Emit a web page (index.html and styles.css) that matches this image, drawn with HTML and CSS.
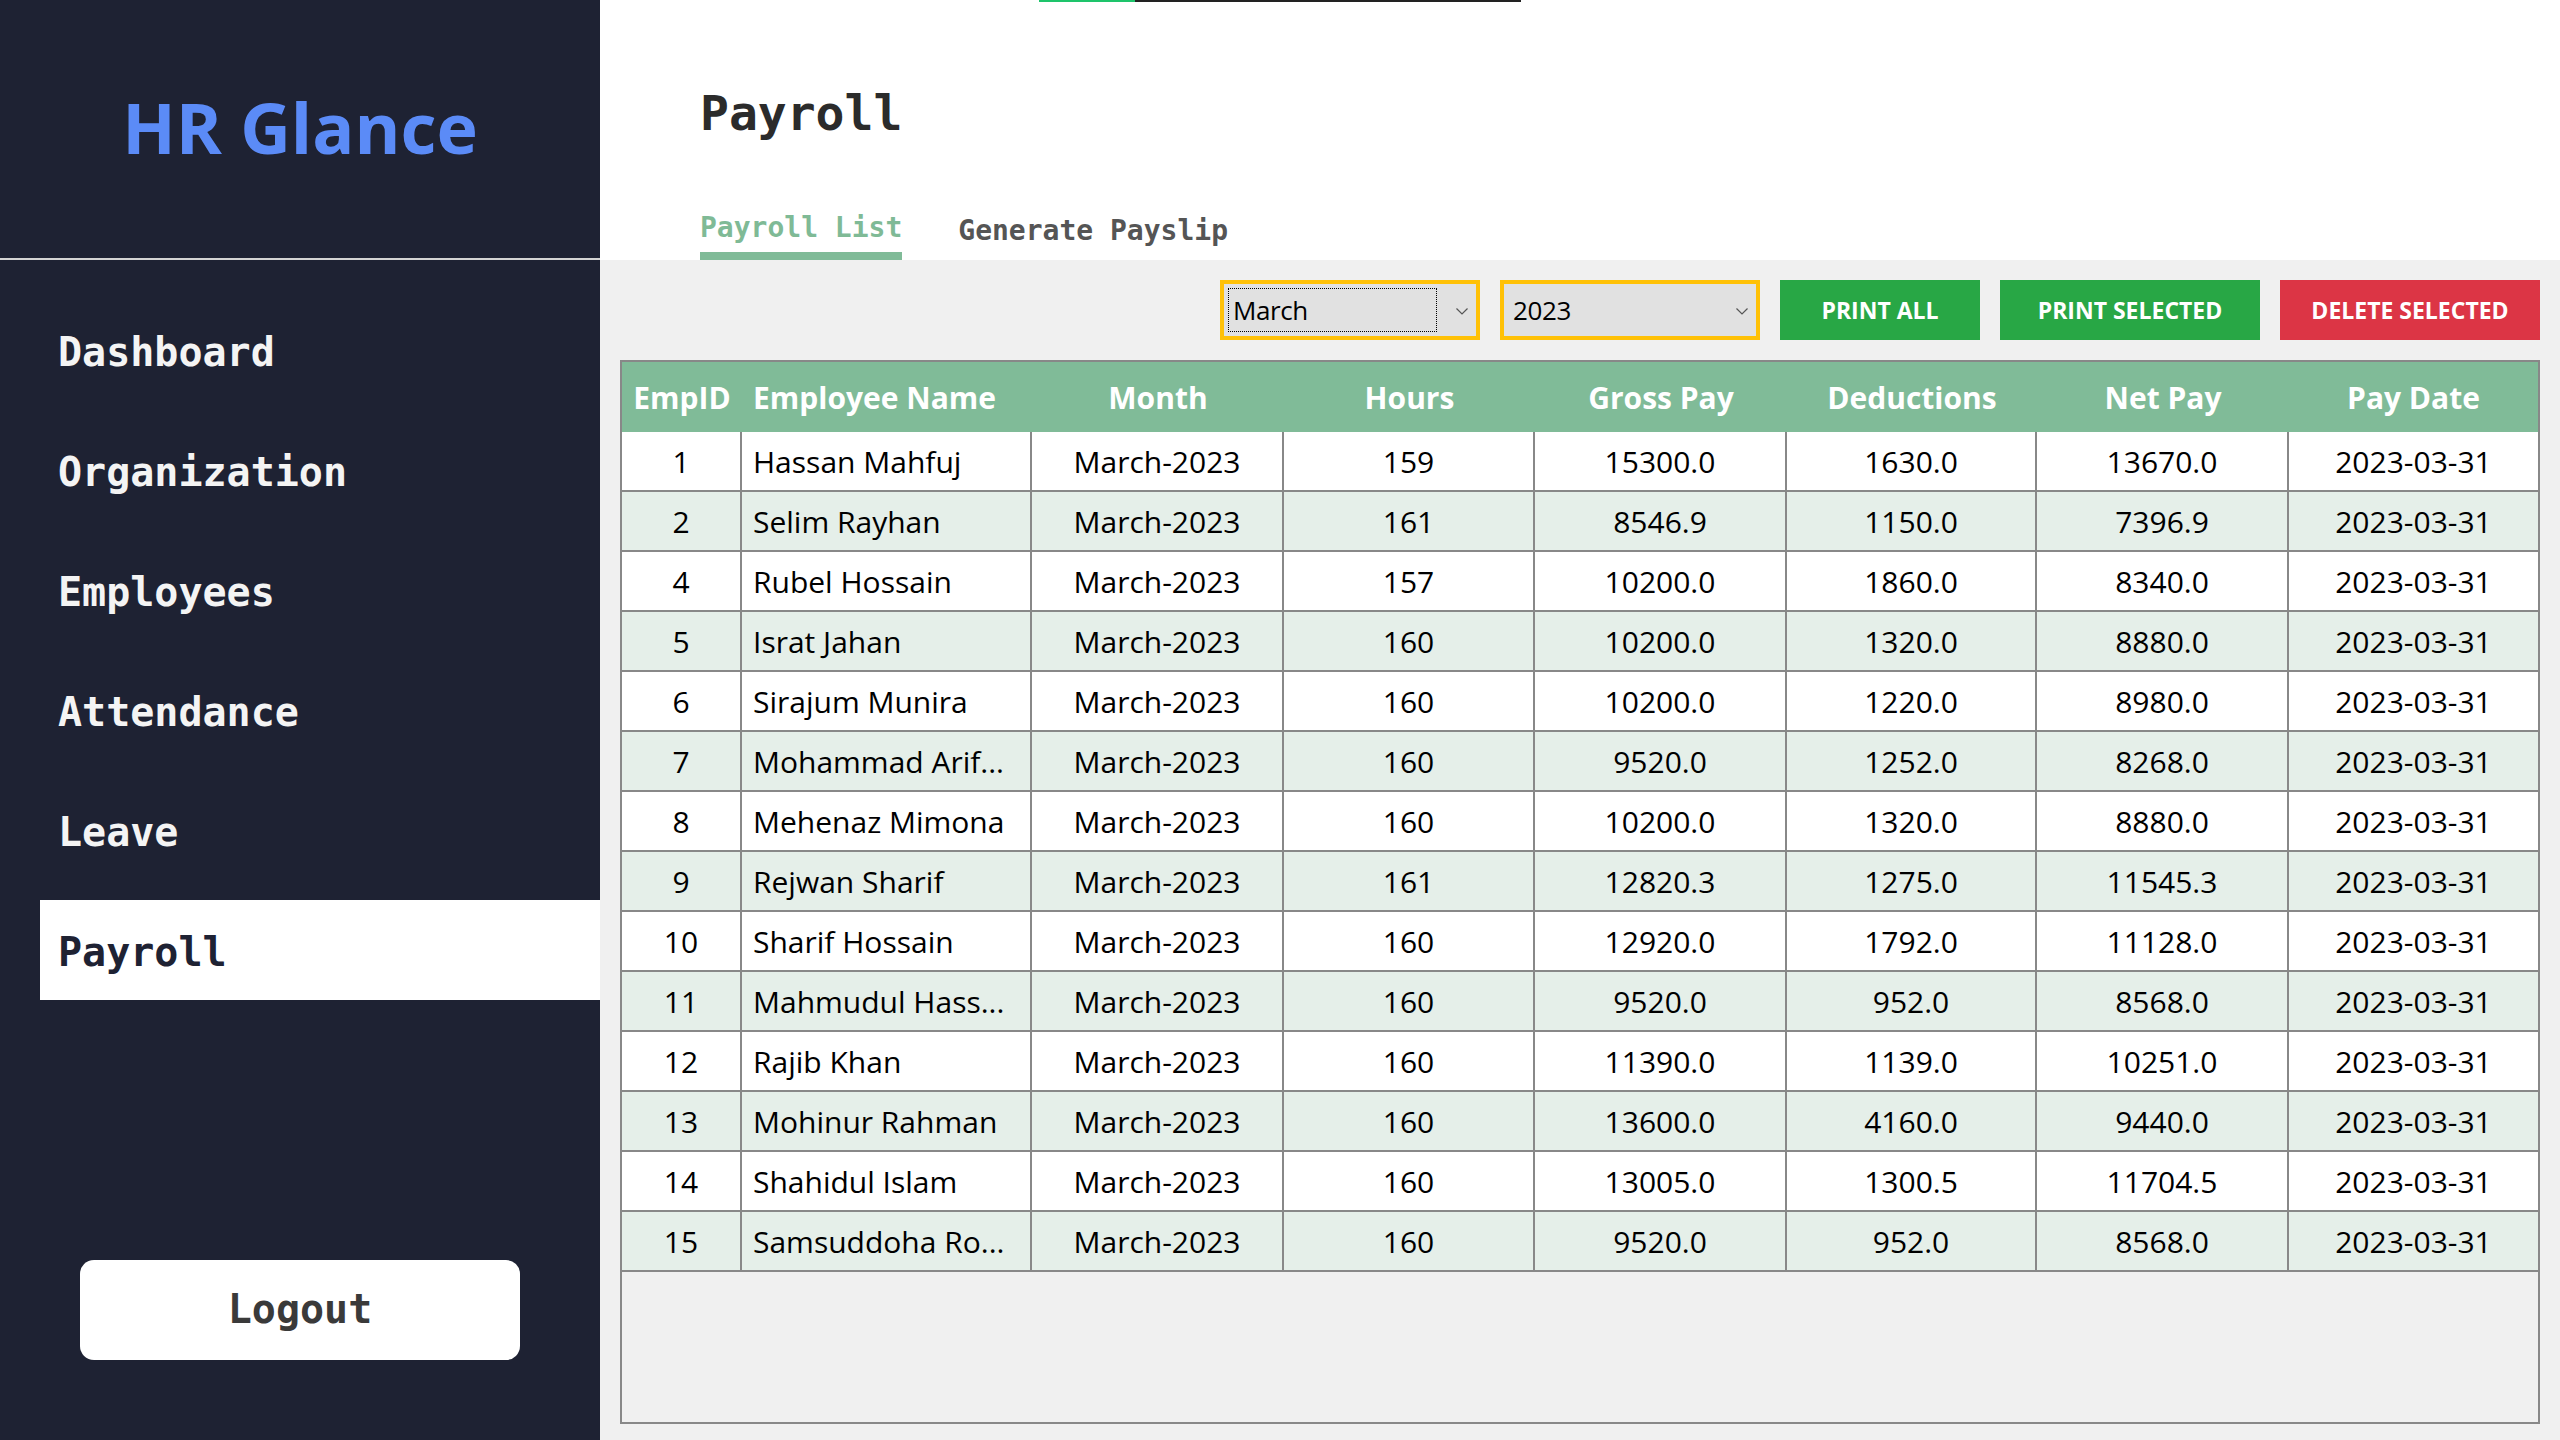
FILE: index.html
```html
<!DOCTYPE html>
<html lang="en">
<head>
<meta charset="utf-8">
<title>HR Glance - Payroll</title>
<link rel="stylesheet" href="styles.css">
</head>
<body>
<div class="app">
  <aside class="sidebar">
    <div class="brand">HR Glance</div>
    <nav class="nav">
      <a class="nav-item">Dashboard</a>
      <a class="nav-item">Organization</a>
      <a class="nav-item">Employees</a>
      <a class="nav-item">Attendance</a>
      <a class="nav-item">Leave</a>
      <a class="nav-item active">Payroll</a>
    </nav>
    <button class="logout">Logout</button>
  </aside>
  <main class="main">
    <div class="loader"><span class="loader-fill"></span></div>
    <header class="page-head">
      <h1 class="page-title">Payroll</h1>
      <div class="tabs">
        <span class="tab active">Payroll List</span>
        <span class="tab">Generate Payslip</span>
      </div>
    </header>
    <section class="content">
      <div class="toolbar">
        <div class="select">
          <span class="select-value focused">March</span>
          <svg class="chev" width="12" height="7" viewBox="0 0 12 7"><path d="M0.5 0.5 L6 6 L11.5 0.5" fill="none" stroke="#555" stroke-width="1.2"/></svg>
        </div>
        <div class="select">
          <span class="select-value">2023</span>
          <svg class="chev" width="12" height="7" viewBox="0 0 12 7"><path d="M0.5 0.5 L6 6 L11.5 0.5" fill="none" stroke="#555" stroke-width="1.2"/></svg>
        </div>
        <button class="btn btn-green btn-sm">PRINT ALL</button>
        <button class="btn btn-green">PRINT SELECTED</button>
        <button class="btn btn-red">DELETE SELECTED</button>
      </div>
      <div class="grid-wrap">
        <div class="row head">
          <div class="cell">EmpID</div>
          <div class="cell name">Employee Name</div>
          <div class="cell">Month</div>
          <div class="cell">Hours</div>
          <div class="cell">Gross Pay</div>
          <div class="cell">Deductions</div>
          <div class="cell">Net Pay</div>
          <div class="cell">Pay Date</div>
        </div>
        <div class="row"><div class="cell">1</div><div class="cell name">Hassan Mahfuj</div><div class="cell">March-2023</div><div class="cell">159</div><div class="cell">15300.0</div><div class="cell">1630.0</div><div class="cell">13670.0</div><div class="cell">2023-03-31</div></div>
        <div class="row"><div class="cell">2</div><div class="cell name">Selim Rayhan</div><div class="cell">March-2023</div><div class="cell">161</div><div class="cell">8546.9</div><div class="cell">1150.0</div><div class="cell">7396.9</div><div class="cell">2023-03-31</div></div>
        <div class="row"><div class="cell">4</div><div class="cell name">Rubel Hossain</div><div class="cell">March-2023</div><div class="cell">157</div><div class="cell">10200.0</div><div class="cell">1860.0</div><div class="cell">8340.0</div><div class="cell">2023-03-31</div></div>
        <div class="row"><div class="cell">5</div><div class="cell name">Israt Jahan</div><div class="cell">March-2023</div><div class="cell">160</div><div class="cell">10200.0</div><div class="cell">1320.0</div><div class="cell">8880.0</div><div class="cell">2023-03-31</div></div>
        <div class="row"><div class="cell">6</div><div class="cell name">Sirajum Munira</div><div class="cell">March-2023</div><div class="cell">160</div><div class="cell">10200.0</div><div class="cell">1220.0</div><div class="cell">8980.0</div><div class="cell">2023-03-31</div></div>
        <div class="row"><div class="cell">7</div><div class="cell name">Mohammad Arif...</div><div class="cell">March-2023</div><div class="cell">160</div><div class="cell">9520.0</div><div class="cell">1252.0</div><div class="cell">8268.0</div><div class="cell">2023-03-31</div></div>
        <div class="row"><div class="cell">8</div><div class="cell name">Mehenaz Mimona</div><div class="cell">March-2023</div><div class="cell">160</div><div class="cell">10200.0</div><div class="cell">1320.0</div><div class="cell">8880.0</div><div class="cell">2023-03-31</div></div>
        <div class="row"><div class="cell">9</div><div class="cell name">Rejwan Sharif</div><div class="cell">March-2023</div><div class="cell">161</div><div class="cell">12820.3</div><div class="cell">1275.0</div><div class="cell">11545.3</div><div class="cell">2023-03-31</div></div>
        <div class="row"><div class="cell">10</div><div class="cell name">Sharif Hossain</div><div class="cell">March-2023</div><div class="cell">160</div><div class="cell">12920.0</div><div class="cell">1792.0</div><div class="cell">11128.0</div><div class="cell">2023-03-31</div></div>
        <div class="row"><div class="cell">11</div><div class="cell name">Mahmudul Hass...</div><div class="cell">March-2023</div><div class="cell">160</div><div class="cell">9520.0</div><div class="cell">952.0</div><div class="cell">8568.0</div><div class="cell">2023-03-31</div></div>
        <div class="row"><div class="cell">12</div><div class="cell name">Rajib Khan</div><div class="cell">March-2023</div><div class="cell">160</div><div class="cell">11390.0</div><div class="cell">1139.0</div><div class="cell">10251.0</div><div class="cell">2023-03-31</div></div>
        <div class="row"><div class="cell">13</div><div class="cell name">Mohinur Rahman</div><div class="cell">March-2023</div><div class="cell">160</div><div class="cell">13600.0</div><div class="cell">4160.0</div><div class="cell">9440.0</div><div class="cell">2023-03-31</div></div>
        <div class="row"><div class="cell">14</div><div class="cell name">Shahidul Islam</div><div class="cell">March-2023</div><div class="cell">160</div><div class="cell">13005.0</div><div class="cell">1300.5</div><div class="cell">11704.5</div><div class="cell">2023-03-31</div></div>
        <div class="row"><div class="cell">15</div><div class="cell name">Samsuddoha Ro...</div><div class="cell">March-2023</div><div class="cell">160</div><div class="cell">9520.0</div><div class="cell">952.0</div><div class="cell">8568.0</div><div class="cell">2023-03-31</div></div>
      </div>
    </section>
  </main>
</div>
</body>
</html>
```

FILE: styles.css
```css
* { box-sizing: border-box; }

html, body {
  margin: 0;
  padding: 0;
}

body {
  width: 2560px;
  height: 1440px;
  overflow: hidden;
  font-family: "Open Sans", "Noto Sans", sans-serif;
  background: #ffffff;
}

.app {
  display: flex;
  height: 1440px;
}

/* ---------- Sidebar ---------- */
.sidebar {
  width: 600px;
  flex: none;
  background: #1e2233;
  display: flex;
  flex-direction: column;
}

.brand {
  height: 260px;
  border-bottom: 2px solid #d4d4d4;
  display: flex;
  align-items: center;
  justify-content: center;
  padding-bottom: 4px;
  font-family: "Open Sans", sans-serif;
  font-weight: 700;
  font-size: 70px;
  color: #5b8bf7;
}

.nav {
  display: flex;
  flex-direction: column;
  gap: 20px;
  padding-top: 40px;
}

.nav-item {
  height: 100px;
  margin-left: 40px;
  padding-left: 18px;
  padding-top: 3px;
  display: flex;
  align-items: center;
  font-family: "DejaVu Sans Mono", "Liberation Mono", monospace;
  font-weight: 700;
  font-size: 40px;
  color: #f4f4f4;
}

.nav-item.active {
  background: #ffffff;
  color: #1e2233;
}

.logout {
  margin: auto auto 80px;
  width: 440px;
  height: 100px;
  border: none;
  border-radius: 14px;
  background: #ffffff;
  font-family: "DejaVu Sans Mono", "Liberation Mono", monospace;
  font-weight: 700;
  font-size: 40px;
  color: #3a3a3a;
  padding: 0 0 2px;
}

/* ---------- Main ---------- */
.main {
  flex: 1;
  display: flex;
  flex-direction: column;
  position: relative;
  background: #ffffff;
}

.loader {
  position: absolute;
  top: 0;
  left: 439px;
  width: 482px;
  height: 2px;
  background: #222222;
}

.loader-fill {
  display: block;
  width: 96px;
  height: 2px;
  background: #1ec46b;
}

.page-head {
  height: 260px;
  padding: 89px 0 0 100px;
  display: flex;
  flex-direction: column;
}

.page-title {
  margin: 0;
  font-family: "DejaVu Sans Mono", "Liberation Mono", monospace;
  font-weight: 700;
  font-size: 48px;
  line-height: 48px;
  color: #2b2b2b;
}

.tabs {
  margin-top: auto;
  display: flex;
  gap: 56px;
  align-items: flex-end;
}

.tab {
  font-family: "DejaVu Sans Mono", "Liberation Mono", monospace;
  font-weight: 700;
  font-size: 28px;
  line-height: 28px;
  padding-bottom: 10px;
  border-bottom: 8px solid transparent;
  color: #555555;
}

.tab:not(.active) {
  padding-bottom: 7px;
}

.tab.active {
  color: #7fba96;
  border-bottom-color: #80bb98;
}

/* ---------- Content ---------- */
.content {
  flex: 1;
  background: #f0f0f0;
  display: flex;
  flex-direction: column;
  padding: 20px 20px 16px;
}

.toolbar {
  display: flex;
  justify-content: flex-end;
  gap: 20px;
  height: 60px;
}

.select {
  width: 260px;
  height: 60px;
  border: 4px solid #ffc107;
  background: #e1e1e1;
  padding: 4px;
  display: flex;
  align-items: center;
}

.select-value {
  width: 209px;
  height: 44px;
  border: 1px dotted transparent;
  padding-left: 4px;
  display: flex;
  align-items: center;
  font-family: "Open Sans", sans-serif;
  font-size: 26px;
  letter-spacing: -0.4px;
  color: #000000;
}

.select-value.focused {
  border-color: #000000;
}

.chev {
  margin-left: auto;
  margin-right: 4px;
  margin-top: 2px;
}

.btn {
  width: 260px;
  height: 60px;
  border: none;
  color: #ffffff;
  font-family: "Open Sans", sans-serif;
  font-weight: 700;
  font-size: 23px;
  padding: 0;
}

.btn-sm { width: 200px; }
.btn-green { background: #28a745; }
.btn-red { background: #dc3545; }

.grid-wrap {
  margin-top: 20px;
  flex: 1;
  border: 2px solid #888888;
  background: #f0f0f0;
}

.row {
  display: grid;
  grid-template-columns: 120px 290px 252px 251px 252px 250px 252px 249px;
  height: 60px;
  border-bottom: 2px solid #888888;
  background: #ffffff;
}

.row:nth-child(odd) {
  background: #e5efe9;
}

.row.head {
  height: 70px;
  border-bottom: none;
  background: #80bb98;
}

.cell {
  display: flex;
  align-items: center;
  justify-content: center;
  border-right: 2px solid #888888;
  white-space: nowrap;
  overflow: hidden;
  font-family: "Open Sans", sans-serif;
  font-size: 30px;
  color: #000000;
}

.cell:last-child {
  border-right: none;
}

.cell.name {
  justify-content: flex-start;
  padding-left: 11px;
}

.row.head .cell {
  border-right: none;
  font-weight: 700;
  color: #ffffff;
}
```
